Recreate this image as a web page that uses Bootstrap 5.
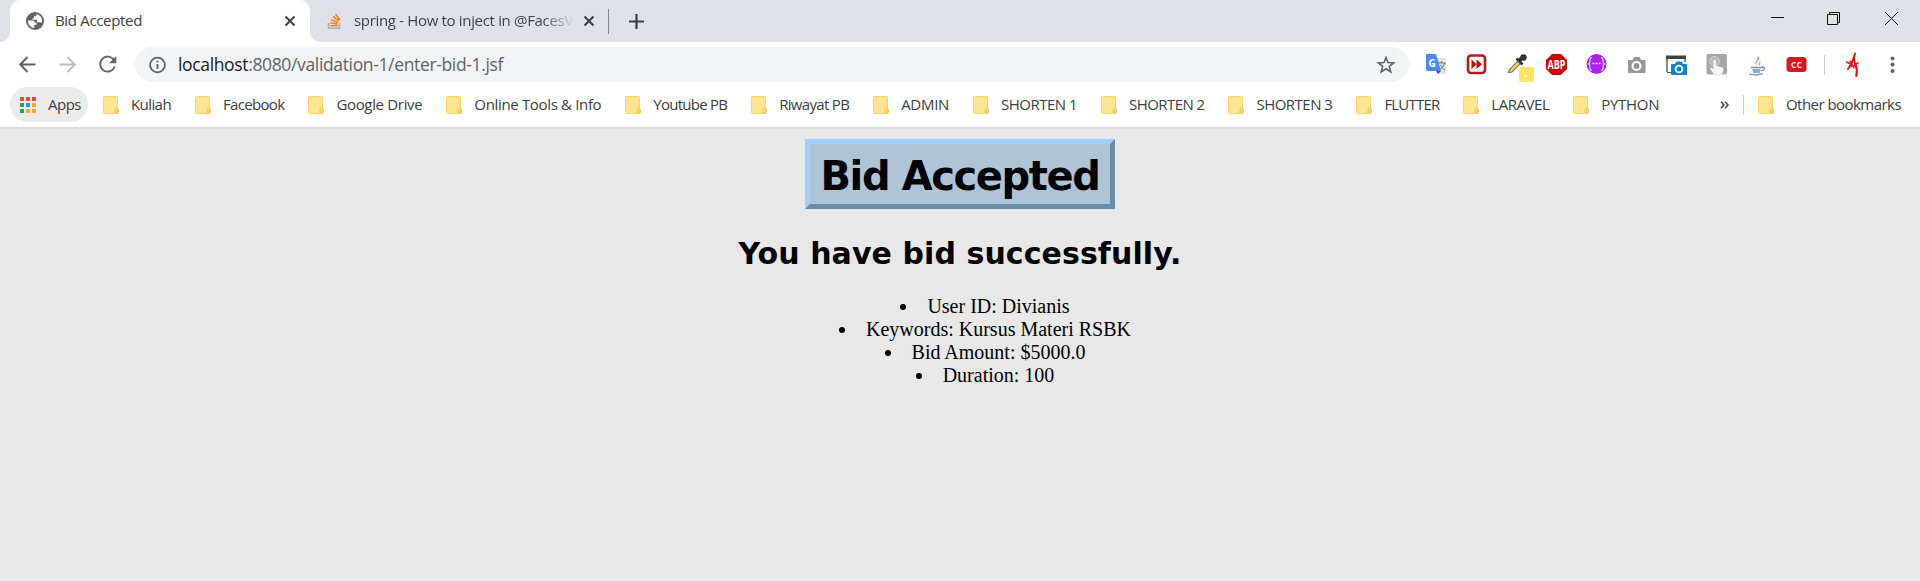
<!DOCTYPE html>
<html lang="en">
<head>
<meta charset="utf-8">
<title>Bid Accepted</title>
<link href="https://cdn.jsdelivr.net/npm/bootstrap@5.3.0/dist/css/bootstrap.min.css" rel="stylesheet">
<style>
body{background:#e8e8e8;height:581px;overflow:hidden;font-family:"Open Sans","Noto Sans",sans-serif;font-size:15px;line-height:20px;color:#3c4043}
svg{display:block;flex:none}
.fit{display:inline-block;white-space:nowrap;flex:none}
header .fit{padding-bottom:2px}
.tabstrip{height:42px;background:#dee1e6;padding-left:10px}
.tab-on{width:300px;background:#fff;border-radius:10px 10px 0 0;padding:0 12px 0 16px;position:relative}
.tab-on::before,.tab-on::after{content:"";position:absolute;bottom:0;width:10px;height:10px}
.tab-on::before{left:-10px;background:radial-gradient(circle at 0 0,transparent 9.5px,#fff 10px)}
.tab-on::after{right:-10px;background:radial-gradient(circle at 100% 0,transparent 9.5px,#fff 10px)}
.tab-off{width:298px;padding:0 11px 0 16px}
.tab-title{width:220px;background:linear-gradient(90deg,#3c4043 86%,#dee1e6);-webkit-background-clip:text;background-clip:text;color:transparent}
.tab-sep{width:1px;height:25px;background:#80868b}
.toolbar-row{height:45px}
.omni{width:1274px;height:35px;margin-left:14px;background:#f1f3f4;padding:0 12px 0 12px;font-size:17.5px;color:#5f6368}
.omni b{font-weight:400;color:#202124}
.marks{height:40px;padding:0 0 5px 10px}
.apps{width:78px;height:35px;background:#ebebeb;padding-left:9px}
.bm{gap:12px;margin-left:23.95px}
.edge{height:2px;background:#dadbde}
.vline{width:1px;height:20px;background:#c8cacd}
.page{color:#000;padding-top:10px}
.page h1{width:310px;height:70px;margin:0;border:5px solid;border-color:#9fcfff #6a8dab #6a8dab #9fcfff;background:#b0c4d8;font:bold 40px/64px "DejaVu Sans",sans-serif;white-space:nowrap;display:flex;justify-content:center}
.page h2{margin:27px 0 0;font:bold 30px/36px "DejaVu Sans",sans-serif;white-space:nowrap}
.page ul{margin:23px 0 0;padding:0 0 0 50px;list-style-position:inside;font:20px/23px "Liberation Serif",serif;text-align:center;width:100%}
</style>
</head>
<body>
<svg width="0" height="0" class="position-absolute">
 <symbol id="folder" viewBox="0 0 16 18"><path d="M1.500.5h12a1 1 0 0 1 1 1v10.700a1.600 1.600 0 0 1 1 1.500v2.800a1 1 0 0 1-1 1h-13a1 1 0 0 1-1-1v-15a1 1 0 0 1 1-1z" fill="#ffe591" stroke="#f8d468"/><path d="M12 17v-3.600a1.400 1.400 0 0 1 2.800 0v3.200z" fill="#fddb61" stroke="#edc44a" stroke-width=".8"/></symbol>
 <symbol id="cross" viewBox="0 0 12 12"><path d="M1.500 1.500l9 9M10.500 1.500l-9 9" stroke="#3c4043" stroke-width="2"/></symbol>
</svg>

<header class="bg-white">
 <div class="tabstrip d-flex align-items-center">
  <div class="tab-on h-100 d-flex align-items-center">
   <svg width="18" height="18" viewBox="0 0 18 18"><circle cx="9" cy="9" r="9" fill="#5f6368"/><path d="M2 8.500h4.500c1.300 0 2.200.8 2.200 2h1.800v2.200H8.300v3.200C4.500 15.700 1.800 12.500 2 8.500zM10.700 2.200c-.2 1.300-1 1.800-2.500 1.800v2.300H6.500v1.500h4.500v2.400h3c.7 0 1.200.4 1.500 1 1.800-3.800-.5-8.200-4.800-9z" fill="#fff"/></svg>
   <span class="fit" data-w="87" style="margin-left:11px">Bid Accepted</span>
   <svg class="ms-auto" width="12" height="12" style="margin-right:2px"><use href="#cross"/></svg>
  </div>
  <div class="tab-off d-flex align-items-center">
   <svg width="18" height="18" viewBox="0 0 18 18"><path d="M2.500 10.500v5.800h11v-5.800" fill="none" stroke="#a9adb5" stroke-width="1.500"/><path d="M4.300 13.800h7.500M4.400 11l7.400 1M5 7.800l7 2.600M7 4.500l6 4.300M9.500 2l4.400 6" stroke="#f48024" stroke-width="1.600"/></svg>
   <span class="tab-title" style="margin-left:10px"><span class="fit" data-w="219">spring - How to inject in @FacesV</span></span>
   <svg class="ms-auto" width="12" height="12" style="margin-right:2px"><use href="#cross"/></svg>
  </div>
  <div class="tab-sep"></div>
  <svg width="15" height="15" viewBox="0 0 15 15" style="margin-left:20px"><path d="M7.500 0v15M0 7.500h15" stroke="#3c4043" stroke-width="2.200"/></svg>
  <svg class="ms-auto" width="150" height="42" viewBox="1770 0 150 42" fill="none" stroke="#111" stroke-width="1"><path d="M1771 17.500h13M1827.500 14.500h10v10h-10zM1829.500 14.500v-2h10v10h-2M1885 12l13 13M1898 12l-13 13"/></svg>
 </div>

 <div class="toolbar-row d-flex align-items-center">
  <svg width="121" height="45" viewBox="0 42 121 45" fill="none" stroke="#5f6368" stroke-width="1.900"><path d="M35.500 64.500H21M27.500 57l-7.300 7.500 7.300 7.500"/><path d="M59.500 64.500H74M67.500 57l7.300 7.500-7.300 7.500" stroke="#babcbe"/><path d="M114 60a7.500 7.500 0 1 0 .8 6.500"/><path d="M116.300 56v7.300H109z" fill="#5f6368" stroke="none"/></svg>
  <div class="omni rounded-pill d-flex align-items-center">
   <svg width="20" height="20" viewBox="0 0 20 20"><circle cx="10.500" cy="10" r="7.400" fill="none" stroke="#5f6368" stroke-width="1.800"/><path d="M10.500 9v5M10.500 5.800v1.800" stroke="#5f6368" stroke-width="1.900"/></svg>
   <span class="fit" data-w="325" style="margin-left:11px"><b>localhost</b>:8080/validation-1/enter-bid-1.jsf</span>
   <svg class="ms-auto" width="20" height="20" viewBox="0 0 20 20" style="margin-right:1px"><path d="M10 2.500l2 5.100 5.700.3-4.400 3.500 1.500 5.500-4.800-3.100-4.800 3.100 1.500-5.500L2.300 7.900l5.700-.3z" fill="none" stroke="#5f6368" stroke-width="1.600"/></svg>
  </div>
  <svg width="511" height="45" viewBox="1409 42 511 45">
   <path d="M1435 58h11v16h-8z" fill="#e1e3e6"/><path d="M1426 54h10l5 17h-13a2 2 0 0 1-2-2z" fill="#4a8af4"/><path d="M1436 71h5l-3 3z" fill="#3c4bb0"/><path d="M1438 63h8M1441.500 61v2M1439 70c3-2 5-4 5.500-7M1440.500 65c1 2 2.500 4 4.500 5" stroke="#70777e" fill="none"/><text x="1428.500" y="66.500" font-family="Open Sans" font-weight="700" font-size="10" fill="#fff">G</text>
   <rect x="1468" y="55.500" width="17" height="17.500" rx="3" fill="#fff6f4" stroke="#b51d1a" stroke-width="2.600"/><path d="M1471.500 59.500l5 4.700-5 4.700zM1476.500 59.500l5.500 4.700-5.500 4.700z" fill="#b5120f"/>
   <path d="M1508.500 72.500l1-3 9-9 2.500 2.500-9 9z" fill="#f0da50" stroke="#777" stroke-width="1.200"/><path d="M1516.500 58.500l6 6" stroke="#333" stroke-width="2.600"/><path d="M1519 61l4-4" stroke="#333" stroke-width="4"/><circle cx="1523.500" cy="57.500" r="3.200" fill="#333"/><rect x="1519" y="67" width="15" height="15" rx="2.500" fill="#fde564"/><rect x="1524.500" y="75" width="2" height="2" fill="#fff"/>
   <path d="M1552 54h9l6 6v9l-6 6h-9l-6-6v-9z" fill="#c90a0a"/><text x="1556.500" y="68.700" text-anchor="middle" textLength="18" lengthAdjust="spacingAndGlyphs" font-family="Open Sans" font-weight="700" font-size="11.500" fill="#fff">ABP</text>
   <circle cx="1596.500" cy="64" r="10" fill="#ab20ee"/><path d="M1592 57.500q-2.500 0-2 4 0 2-1.500 2.500 1.500.5 1.500 2.500-.5 4 2 4M1601 57.500q2.500 0 2 4 0 2 1.500 2.500-1.500.5-1.500 2.500.5 4-2 4" fill="none" stroke="#ecd2fc" stroke-width="1.200"/><path d="M1592.500 63.500h8" stroke="#fff" stroke-width="1.600" stroke-dasharray="1.800 1.400"/>
   <path d="M1629 60h3.500l1.500-3h5.500l1.500 3h3.500a1 1 0 0 1 1 1v11a1 1 0 0 1-1 1h-15.500a1 1 0 0 1-1-1V61a1 1 0 0 1 1-1z" fill="#979797"/><circle cx="1636.500" cy="66" r="4" fill="none" stroke="#fff" stroke-width="2"/>
   <path d="M1667 72V57h18v5" fill="#fff" stroke="#555" stroke-width="1.400"/><path d="M1666 55.500h20v3.500h-20z" fill="#444"/><path d="M1667 72.500h5" stroke="#555"/><path d="M1672 64h3l1.500-2.500h5L1683 64h3a1 1 0 0 1 1 1v9a1 1 0 0 1-1 1h-14a1 1 0 0 1-1-1v-9a1 1 0 0 1 1-1z" fill="#0d83d2"/><circle cx="1679" cy="69" r="3.400" fill="none" stroke="#fff" stroke-width="1.800"/>
   <rect x="1706.500" y="54" width="20.500" height="20.500" rx="2" fill="#a6a6a6"/><circle cx="1714.500" cy="61.500" r="5" fill="#bbb" stroke="#d4d4d4"/><path d="M1714 74.500l-4-6c1-1.500 2.500-.5 3.500 1v-8c0-2 2.500-2 2.500 0v4.500l6 1.200c1.500.3 1.500 2 1 4l-1 3.300z" fill="#f5f8fb"/>
   <path d="M1757 65c-5-3 3-4 0-9 6 4-3 5 0 9zM1759 66c-1-3 .5-4 2.500-4.500-3 2-.5 2.500-2.500 4.500z" fill="#ed8433"/><path d="M1751 67.500h12M1752.500 70h8M1753 72h7M1749 74c4 1.200 11 1 14-.5M1762 67c4-.5 2.500 3.500-1 3.700" stroke="#6d91ad" fill="none" stroke-width="1.300"/>
   <rect x="1786.500" y="57" width="20" height="15" rx="3.500" fill="#d21a20"/><text x="1796.500" y="68" text-anchor="middle" font-family="Open Sans" font-weight="700" font-size="9.500" textLength="11" lengthAdjust="spacingAndGlyphs" fill="#ffdcdc">CC</text>
   <path d="M1824.500 55v20" stroke="#c8cacd"/>
   <g fill="none" stroke="#ea1016" stroke-linecap="round"><path d="M1855 53.500c-1 4-3 10.500-7 15.500" stroke-width="2"/><path d="M1854 58c0 5 1.500 7 2.500 10 .6 2 .3 5-.2 8" stroke-width="2.200"/><path d="M1846.500 62l3 1.500M1858 63l-2 1M1849.500 66.500c3-.8 4-1 7-.5M1850 61l4 7" stroke-width="1.400"/></g>
   <g fill="#5f6368"><circle cx="1892.500" cy="58.500" r="2"/><circle cx="1892.500" cy="64.500" r="2"/><circle cx="1892.500" cy="71" r="2"/></g>
  </svg>
 </div>

 <nav class="marks d-flex align-items-center">
  <div class="apps rounded-pill d-flex align-items-center">
   <svg width="18" height="18" viewBox="0 0 18 18"><path d="M1 1h4v4H1zM7 1h4v4H7zM13 1h4v4h-4z" fill="#f04438"/><path d="M1 7h4v4H1zM1 13h4v4H1z" fill="#24a25a"/><path d="M7 7h4v4H7z" fill="#2b8af5"/><path d="M13 7h4v4h-4zM7 13h4v4H7zM13 13h4v4h-4z" fill="#f7ac16"/></svg>
   <span class="fit" data-w="33" style="margin-left:11px">Apps</span>
  </div>
  <div class="bm d-flex align-items-center" style="margin-left:15px"><svg width="16" height="18"><use href="#folder"/></svg><span class="fit" data-w="40">Kuliah</span></div>
  <div class="bm d-flex align-items-center"><svg width="16" height="18"><use href="#folder"/></svg><span class="fit" data-w="61.500">Facebook</span></div>
  <div class="bm d-flex align-items-center"><svg width="16" height="18"><use href="#folder"/></svg><span class="fit" data-w="86">Google Drive</span></div>
  <div class="bm d-flex align-items-center"><svg width="16" height="18"><use href="#folder"/></svg><span class="fit" data-w="127">Online Tools &amp; Info</span></div>
  <div class="bm d-flex align-items-center"><svg width="16" height="18"><use href="#folder"/></svg><span class="fit" data-w="74">Youtube PB</span></div>
  <div class="bm d-flex align-items-center"><svg width="16" height="18"><use href="#folder"/></svg><span class="fit" data-w="70">Riwayat PB</span></div>
  <div class="bm d-flex align-items-center"><svg width="16" height="18"><use href="#folder"/></svg><span class="fit" data-w="48">ADMIN</span></div>
  <div class="bm d-flex align-items-center"><svg width="16" height="18"><use href="#folder"/></svg><span class="fit" data-w="76">SHORTEN 1</span></div>
  <div class="bm d-flex align-items-center"><svg width="16" height="18"><use href="#folder"/></svg><span class="fit" data-w="75.500">SHORTEN 2</span></div>
  <div class="bm d-flex align-items-center"><svg width="16" height="18"><use href="#folder"/></svg><span class="fit" data-w="76">SHORTEN 3</span></div>
  <div class="bm d-flex align-items-center"><svg width="16" height="18"><use href="#folder"/></svg><span class="fit" data-w="55">FLUTTER</span></div>
  <div class="bm d-flex align-items-center"><svg width="16" height="18"><use href="#folder"/></svg><span class="fit" data-w="58">LARAVEL</span></div>
  <div class="bm d-flex align-items-center"><svg width="16" height="18"><use href="#folder"/></svg><span class="fit" data-w="58">PYTHON</span></div>
  <div class="d-flex align-items-center ms-auto" style="margin-right:19px">
   <svg width="9" height="8" viewBox="0 0 9 8" style="margin-right:14px"><path d="M1 .8L4 4 1 7.200M5 .8L8 4 5 7.200" fill="none" stroke="#3c4043" stroke-width="1.500"/></svg>
   <div class="vline"></div>
   <div class="bm d-flex align-items-center" style="margin-left:14px"><svg width="16" height="18"><use href="#folder"/></svg><span class="fit" data-w="115">Other bookmarks</span></div>
  </div>
 </nav>
 <div class="edge"></div>
</header>

<main class="page d-flex flex-column align-items-center">
 <h1><span class="fit" data-w="279">Bid Accepted</span></h1>
 <h2><span class="fit" data-w="443">You have bid successfully.</span></h2>
 <ul>
  <li>User ID: Divianis</li>
  <li>Keywords: Kursus Materi RSBK</li>
  <li>Bid Amount: $5000.0</li>
  <li>Duration: 100</li>
 </ul>
</main>

<script src="https://cdn.jsdelivr.net/npm/bootstrap@5.3.0/dist/js/bootstrap.bundle.min.js"></script>
<script>
// Track each label so it fills its allotted width exactly.
document.querySelectorAll('.fit').forEach(function (el) {
  var target = +el.dataset.w, n = el.textContent.length;
  el.style.letterSpacing = (target - el.getBoundingClientRect().width) / n + 'px';
});
</script>
</body>
</html>
